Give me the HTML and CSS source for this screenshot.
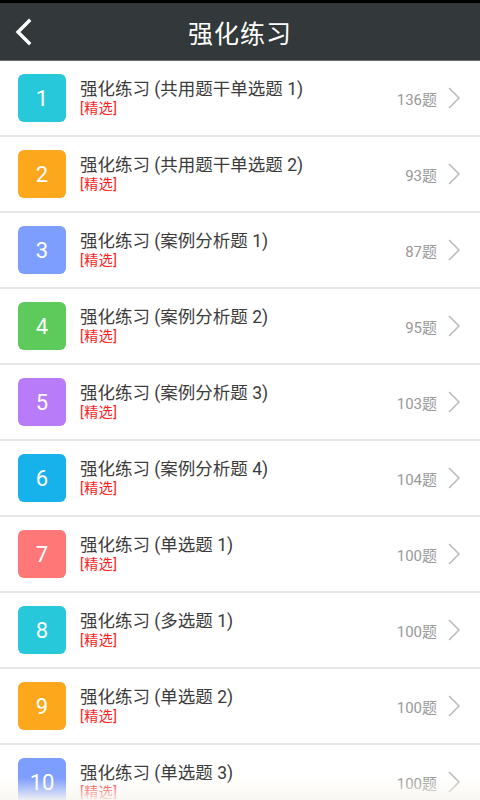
FILE: index.html
```html
<!DOCTYPE html>
<html lang="zh-CN">
<head>
    <meta charset="UTF-8">
    <meta name="viewport" content="width=device-width, initial-scale=1.0">
    <title>强化练习</title>
    <link rel="stylesheet" href="styles.css">
</head>
<body>
    <div class="header">
        <a class="back-btn" href="#">
            <svg width="20" height="28" viewBox="0 0 20 28">
                <polyline points="15,3 4,14 15,25" fill="none" stroke="#fff" stroke-width="3.4" stroke-linecap="square"/>
            </svg>
        </a>
        <h1>强化练习</h1>
    </div>

    <ul class="list">
        <li class="item">
            <span class="badge c1">1</span>
            <div class="info">
                <p class="name">强化练习 (共用题干单选题 1)</p>
                <p class="tag">[精选]</p>
            </div>
            <span class="count">136题</span>
            <svg class="arrow" width="12" height="22" viewBox="0 0 12 22"><polyline points="1,1 11,11 1,21" fill="none" stroke="#b8b8b8" stroke-width="1.5"/></svg>
        </li>
        <li class="item">
            <span class="badge c2">2</span>
            <div class="info">
                <p class="name">强化练习 (共用题干单选题 2)</p>
                <p class="tag">[精选]</p>
            </div>
            <span class="count">93题</span>
            <svg class="arrow" width="12" height="22" viewBox="0 0 12 22"><polyline points="1,1 11,11 1,21" fill="none" stroke="#b8b8b8" stroke-width="1.5"/></svg>
        </li>
        <li class="item">
            <span class="badge c3">3</span>
            <div class="info">
                <p class="name">强化练习 (案例分析题 1)</p>
                <p class="tag">[精选]</p>
            </div>
            <span class="count">87题</span>
            <svg class="arrow" width="12" height="22" viewBox="0 0 12 22"><polyline points="1,1 11,11 1,21" fill="none" stroke="#b8b8b8" stroke-width="1.5"/></svg>
        </li>
        <li class="item">
            <span class="badge c4">4</span>
            <div class="info">
                <p class="name">强化练习 (案例分析题 2)</p>
                <p class="tag">[精选]</p>
            </div>
            <span class="count">95题</span>
            <svg class="arrow" width="12" height="22" viewBox="0 0 12 22"><polyline points="1,1 11,11 1,21" fill="none" stroke="#b8b8b8" stroke-width="1.5"/></svg>
        </li>
        <li class="item">
            <span class="badge c5">5</span>
            <div class="info">
                <p class="name">强化练习 (案例分析题 3)</p>
                <p class="tag">[精选]</p>
            </div>
            <span class="count">103题</span>
            <svg class="arrow" width="12" height="22" viewBox="0 0 12 22"><polyline points="1,1 11,11 1,21" fill="none" stroke="#b8b8b8" stroke-width="1.5"/></svg>
        </li>
        <li class="item">
            <span class="badge c6">6</span>
            <div class="info">
                <p class="name">强化练习 (案例分析题 4)</p>
                <p class="tag">[精选]</p>
            </div>
            <span class="count">104题</span>
            <svg class="arrow" width="12" height="22" viewBox="0 0 12 22"><polyline points="1,1 11,11 1,21" fill="none" stroke="#b8b8b8" stroke-width="1.5"/></svg>
        </li>
        <li class="item">
            <span class="badge c7">7</span>
            <div class="info">
                <p class="name">强化练习 (单选题 1)</p>
                <p class="tag">[精选]</p>
            </div>
            <span class="count">100题</span>
            <svg class="arrow" width="12" height="22" viewBox="0 0 12 22"><polyline points="1,1 11,11 1,21" fill="none" stroke="#b8b8b8" stroke-width="1.5"/></svg>
        </li>
        <li class="item">
            <span class="badge c1">8</span>
            <div class="info">
                <p class="name">强化练习 (多选题 1)</p>
                <p class="tag">[精选]</p>
            </div>
            <span class="count">100题</span>
            <svg class="arrow" width="12" height="22" viewBox="0 0 12 22"><polyline points="1,1 11,11 1,21" fill="none" stroke="#b8b8b8" stroke-width="1.5"/></svg>
        </li>
        <li class="item">
            <span class="badge c2">9</span>
            <div class="info">
                <p class="name">强化练习 (单选题 2)</p>
                <p class="tag">[精选]</p>
            </div>
            <span class="count">100题</span>
            <svg class="arrow" width="12" height="22" viewBox="0 0 12 22"><polyline points="1,1 11,11 1,21" fill="none" stroke="#b8b8b8" stroke-width="1.5"/></svg>
        </li>
        <li class="item">
            <span class="badge c3">10</span>
            <div class="info">
                <p class="name">强化练习 (单选题 3)</p>
                <p class="tag">[精选]</p>
            </div>
            <span class="count">100题</span>
            <svg class="arrow" width="12" height="22" viewBox="0 0 12 22"><polyline points="1,1 11,11 1,21" fill="none" stroke="#b8b8b8" stroke-width="1.5"/></svg>
        </li>
    </ul>

    <div class="fade"></div>
</body>
</html>
```

FILE: styles.css
```css
body {
    margin: 0;
    font-family: 'Roboto', 'Noto Sans CJK SC', sans-serif;
    background-color: #fff;
    height: 800px;
    overflow: hidden;
}

.header {
    height: 57px;
    border-top: 3px solid #000;
    border-bottom: 1px solid #6f7273;
    background-color: #33383a;
    display: flex;
    align-items: center;
    justify-content: center;
    position: relative;
}

.header h1 {
    margin: 0;
    color: #fff;
    font-size: 25px;
    font-weight: normal;
    letter-spacing: 1px;
}

.back-btn {
    position: absolute;
    left: 14px;
    top: 15px;
    display: block;
}

.list {
    list-style: none;
    margin: 0;
    padding: 0;
}

.item {
    display: flex;
    align-items: center;
    height: 74px;
    padding: 0 20px 0 18px;
    border-bottom: 2px solid #e6e6e6;
}

.badge {
    width: 48px;
    height: 48px;
    border-radius: 6px;
    color: #fff;
    font-size: 22px;
    display: flex;
    align-items: center;
    justify-content: center;
    flex-shrink: 0;
}

.c1 { background-color: #27c8da; }
.c2 { background-color: #fda81c; }
.c3 { background-color: #7e9eff; }
.c4 { background-color: #5ccb5c; }
.c5 { background-color: #b87cf8; }
.c6 { background-color: #17b2eb; }
.c7 { background-color: #ff7777; }

.info {
    flex: 1;
    margin-left: 14px;
}

.info p {
    margin: 0;
}

.name {
    font-size: 17.5px;
    line-height: 20px;
    color: #3c3c3c;
}

.tag {
    font-size: 14px;
    line-height: 17px;
    color: #f22;
    letter-spacing: 0.5px;
    margin-top: 1px !important;
}

.count {
    font-size: 15px;
    color: #999;
    margin-right: 11px;
}

.arrow {
    flex-shrink: 0;
}

.fade {
    position: fixed;
    left: 0;
    right: 0;
    bottom: 0;
    height: 22px;
    background: linear-gradient(rgba(255, 255, 255, 0), rgba(248, 246, 240, 0.9));
}
```
